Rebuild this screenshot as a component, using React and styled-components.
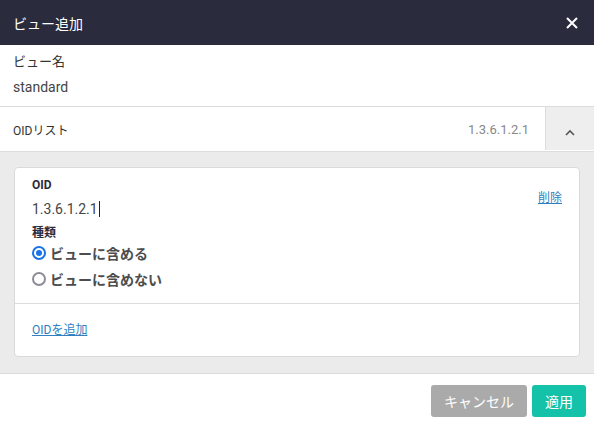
import React from "react";
import styled, { createGlobalStyle } from "styled-components";

const Global = createGlobalStyle`
  html, body { margin: 0; padding: 0; background: #fff; }
  body {
    font-family: Roboto, "Noto Sans CJK JP", "Noto Sans", sans-serif;
    color: #333;
  }
  * { box-sizing: border-box; }
`;

const Dialog = styled.div`
  width: 594px;
  height: 428px;
  display: flex;
  flex-direction: column;
  background: #fff;
`;

const Header = styled.div`
  height: 45px;
  flex: none;
  display: flex;
  align-items: center;
  justify-content: space-between;
  padding: 0 14px 0 13px;
  background: #2a2b3d;
  color: #fff;
  font-size: 14px;
`;

const CloseButton = styled.button`
  width: 16px;
  height: 16px;
  padding: 0;
  border: none;
  background: none;
  display: flex;
  align-items: center;
  justify-content: center;
  cursor: pointer;
`;

const NameSection = styled.div`
  padding: 8px 13px 9px;
  border-bottom: 1px solid #dcdcdc;
  display: flex;
  flex-direction: column;
  gap: 6px;
`;

const NameLabel = styled.div`
  font-size: 13px;
  line-height: 18px;
  color: #333;
`;

const NameValue = styled.div`
  font-size: 14px;
  line-height: 20px;
  color: #444;
`;

const ListRow = styled.div`
  height: 45px;
  flex: none;
  display: flex;
  align-items: stretch;
  border-bottom: 1px solid #dcdcdc;
`;

const ListLabel = styled.div`
  flex: 1;
  display: flex;
  align-items: center;
  padding-left: 13px;
  font-size: 12px;
  color: #333;
`;

const ListValue = styled.div`
  display: flex;
  align-items: center;
  padding-right: 16px;
  font-size: 13px;
  color: #888;
`;

const ToggleButton = styled.button`
  width: 49px;
  margin-bottom: 1px;
  border: none;
  border-left: 1px solid #dcdcdc;
  background: #eeeeee;
  display: flex;
  align-items: center;
  justify-content: center;
  padding: 8px 0 0;
  cursor: pointer;
`;

const Body = styled.div`
  flex: 1;
  background: #ebebeb;
  padding: 15px 14px 16px;
  border-bottom: 1px solid #dcdcdc;
`;

const Card = styled.div`
  background: #fff;
  border: 1px solid #dadada;
  border-radius: 4px;
`;

const CardMain = styled.div`
  padding: 10px 17px 11px;
  border-bottom: 1px solid #dcdcdc;
`;

const OidRow = styled.div`
  display: flex;
  align-items: center;
  justify-content: space-between;
`;

const Field = styled.div`
  display: flex;
  flex-direction: column;
  gap: 7px;
`;

const FieldLabel = styled.div`
  font-size: 12px;
  font-weight: 700;
  line-height: 14px;
  color: #2a2b3d;
`;

const OidInput = styled.div`
  font-size: 14px;
  line-height: 20px;
  color: #444;
  display: flex;
  align-items: center;
`;

const Caret = styled.span`
  display: inline-block;
  width: 1px;
  height: 16px;
  background: #222;
  margin-left: 1px;
`;

const Link = styled.a`
  font-size: 12px;
  color: #2f7fc1;
  text-decoration: underline;
  cursor: pointer;
  margin-top: ${(p) => p.$offset || 0}px;
`;

const KindLabel = styled(FieldLabel)`
  margin-top: 7px;
`;

const RadioRow = styled.label`
  height: 26px;
  display: flex;
  align-items: center;
  gap: 4px;
  font-size: 14px;
  font-weight: 700;
  color: #4d4d4d;
  cursor: pointer;
`;

const RadioMark = styled.span`
  width: 14px;
  height: 14px;
  border-radius: 50%;
  border: 2px solid ${(p) => (p.$checked ? "#1a73e8" : "#8d8d98")};
  display: flex;
  align-items: center;
  justify-content: center;
  &::after {
    content: "";
    width: 6px;
    height: 6px;
    border-radius: 50%;
    background: ${(p) => (p.$checked ? "#1a73e8" : "transparent")};
  }
`;

const CardFooter = styled.div`
  padding: 17px 17px 18px;
  line-height: 16px;
`;

const Footer = styled.div`
  height: 55px;
  flex: none;
  display: flex;
  align-items: center;
  justify-content: flex-end;
  gap: 5px;
  padding: 0 8px 1px 0;
`;

const Button = styled.button`
  height: 32px;
  padding: 0 ${(p) => p.$pad}px;
  border: none;
  border-radius: 3px;
  background: ${(p) => p.$bg};
  color: #fff;
  font-family: inherit;
  font-size: 14px;
  cursor: pointer;
`;

function Radio({ checked, children }) {
  return (
    <RadioRow>
      <RadioMark $checked={checked} />
      {children}
    </RadioRow>
  );
}

export default function App() {
  return (
    <>
      <Global />
      <Dialog>
        <Header>
          <span>ビュー追加</span>
          <CloseButton aria-label="close">
            <svg width="12" height="12" viewBox="0 0 12 12">
              <path d="M1 1 L11 11 M11 1 L1 11" stroke="#fff" strokeWidth="2" />
            </svg>
          </CloseButton>
        </Header>

        <NameSection>
          <NameLabel>ビュー名</NameLabel>
          <NameValue>standard</NameValue>
        </NameSection>

        <ListRow>
          <ListLabel>OIDリスト</ListLabel>
          <ListValue>1.3.6.1.2.1</ListValue>
          <ToggleButton aria-label="collapse">
            <svg width="10" height="7" viewBox="0 0 10 7">
              <path d="M1 6 L5 2 L9 6" stroke="#555" strokeWidth="1.6" fill="none" />
            </svg>
          </ToggleButton>
        </ListRow>

        <Body>
          <Card>
            <CardMain>
              <OidRow>
                <Field>
                  <FieldLabel>OID</FieldLabel>
                  <OidInput>
                    1.3.6.1.2.1<Caret />
                  </OidInput>
                </Field>
                <Link $offset={-4}>削除</Link>
              </OidRow>
              <KindLabel>種類</KindLabel>
              <Radio checked>ビューに含める</Radio>
              <Radio>ビューに含めない</Radio>
            </CardMain>
            <CardFooter>
              <Link>OIDを追加</Link>
            </CardFooter>
          </Card>
        </Body>

        <Footer>
          <Button $bg="#aaaaaa" $pad={13}>キャンセル</Button>
          <Button $bg="#13c2a9" $pad={13}>適用</Button>
        </Footer>
      </Dialog>
    </>
  );
}
